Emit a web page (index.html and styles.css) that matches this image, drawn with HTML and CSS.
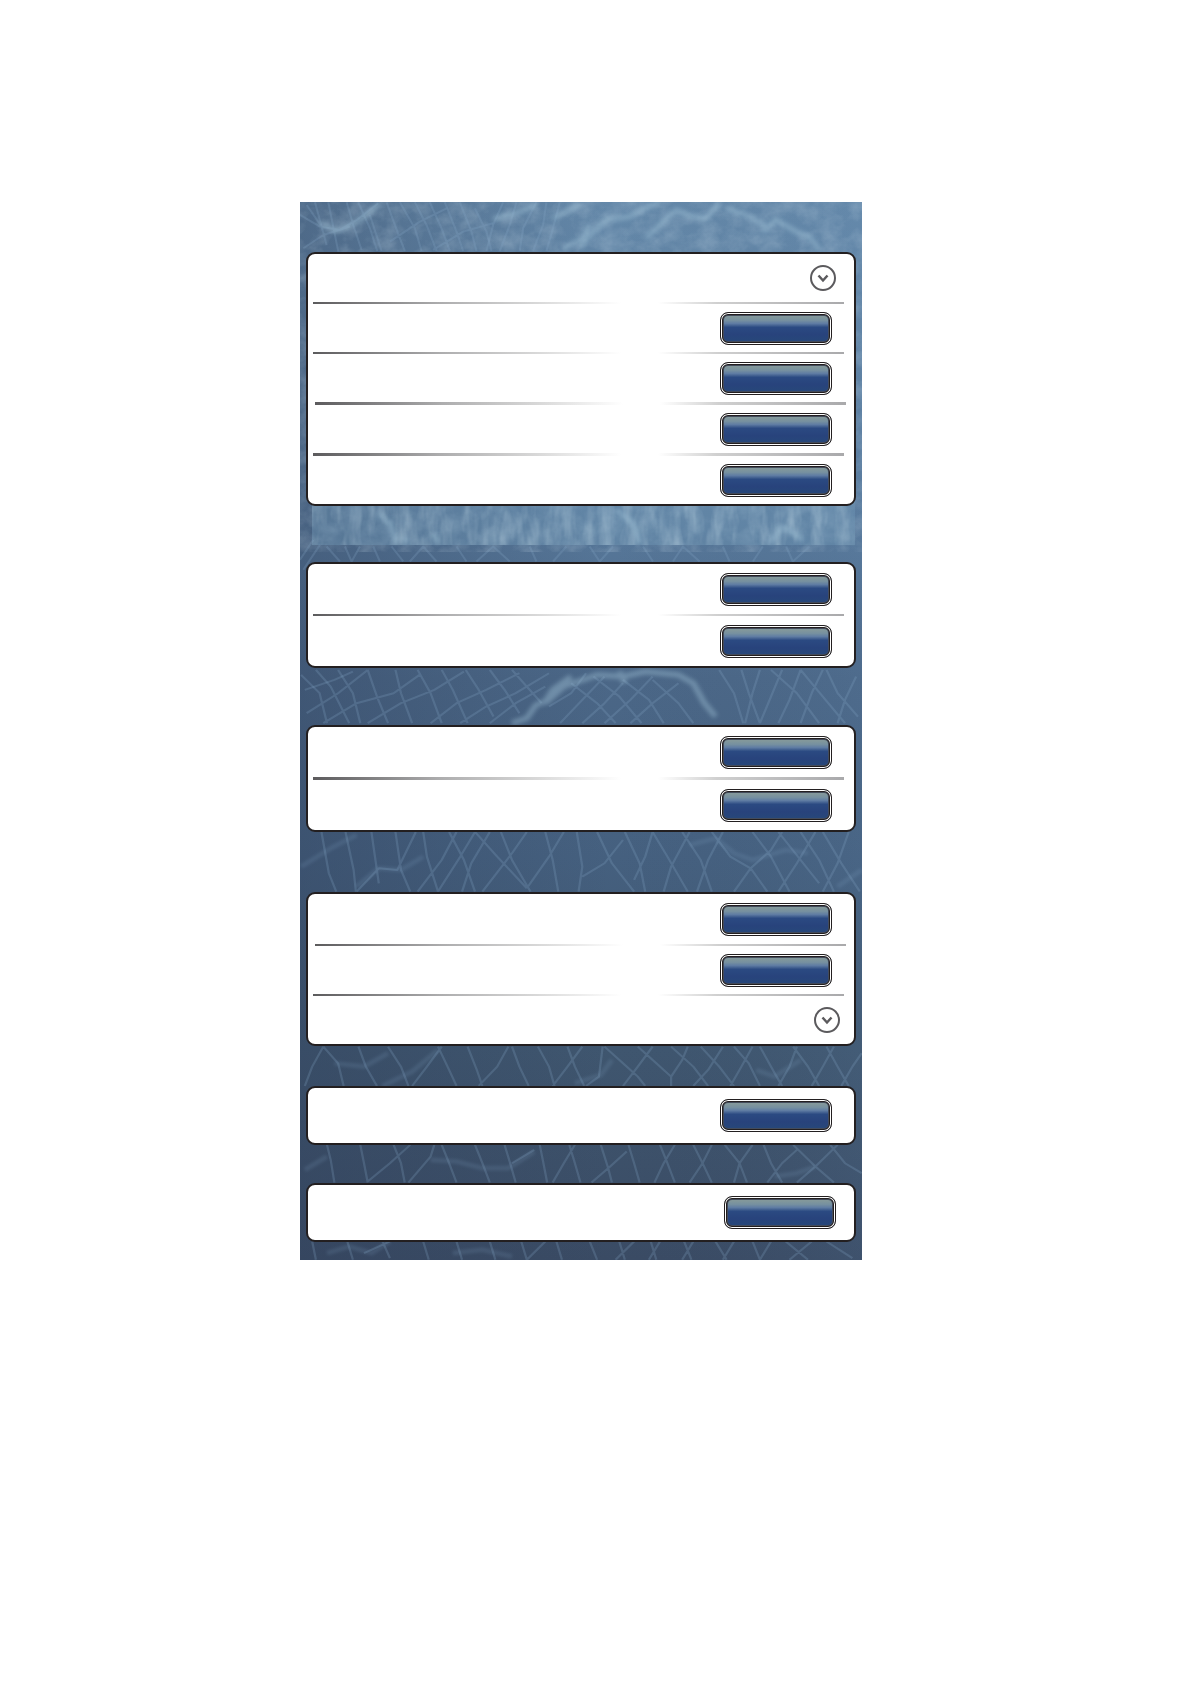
FILE: index.html
```html
<!DOCTYPE html>
<html lang="en">

<head>
    <meta charset="UTF-8">
    <meta name="viewport" content="width=device-width, initial-scale=1.0">
    <title>Settings</title>
    <link rel="stylesheet" href="styles.css">
</head>

<body>
    <main class="panel">
        <!-- water surface behind the cards -->
        <svg class="water" viewBox="300 202 562 1058" preserveAspectRatio="none" aria-hidden="true">
            <defs>
                <linearGradient id="depth" x1="0" y1="0" x2="0" y2="1">
                    <stop offset="0" stop-color="#6488a9" />
                    <stop offset="0.3" stop-color="#58799b" />
                    <stop offset="0.45" stop-color="#4b6787" />
                    <stop offset="0.62" stop-color="#45607f" />
                    <stop offset="0.8" stop-color="#3f566f" />
                    <stop offset="1" stop-color="#3a4b64" />
                </linearGradient>
                <linearGradient id="shade" x1="0" y1="0" x2="1" y2="0">
                    <stop offset="0" stop-color="#2f3f5a" stop-opacity="0.4" />
                    <stop offset="0.55" stop-color="#2f3f5a" stop-opacity="0" />
                    <stop offset="1" stop-color="#6a93bd" stop-opacity="0.1" />
                </linearGradient>
                <filter id="ripple" x="0" y="0" width="1" height="1">
                    <feTurbulence type="fractalNoise" baseFrequency="0.05 0.06" numOctaves="4" seed="4" />
                    <feColorMatrix values="0 0 0 0 0.58  0 0 0 0 0.71  0 0 0 0 0.81  1.4 0 0 0 -0.5" />
                </filter>
                <filter id="streaks" x="0" y="0" width="1" height="1">
                    <feTurbulence type="fractalNoise" baseFrequency="0.08 0.025" numOctaves="3" seed="9" />
                    <feColorMatrix values="0 0 0 0 0.55  0 0 0 0 0.7  0 0 0 0 0.79  1.8 0 0 0 -0.7" />
                </filter>
            </defs>

            <rect x="300" y="202" width="562" height="1058" fill="url(#depth)" />
            <rect x="300" y="202" width="562" height="1058" fill="url(#shade)" />
            <rect x="300" y="202" width="562" height="350" filter="url(#ripple)" opacity="0.35" />

            <!-- top band -->
            <g class="net" transform="translate(290 195) scale(0.333)">
                <path d="M30 60L90 95L150 105L200 75L265 25M50 30L95 95M75 22L110 150M115 22L145 170M170 22L190 90L215 165M205 22L240 100L262 168M240 60L275 168M290 22L330 130L345 168M330 22L375 100L395 168M375 22L410 90L440 168M420 22L455 100L480 168M465 22L500 110L520 168M510 22L545 110L560 168M555 40L590 110L605 168M40 160L100 120L180 95M300 140L390 80L470 40M430 165L520 110L610 85" />
                <path d="M640 22L610 90L590 168M680 22L660 90L630 168M740 22L700 100L690 168M770 22L760 90L730 168M810 22L790 100L770 168" />
                <path class="glint" d="M90 85L140 108L190 88L230 60L270 24M610 72L690 52L740 28M790 70L830 50L870 30M820 160L880 130L900 90" />
                <path class="glint" d="M870 160L900 120L950 75L1020 65L1070 38L1110 22M1070 130L1110 90L1160 45L1200 62L1250 70L1290 24M1420 110L1460 75L1520 110L1560 125L1590 165M1310 40L1370 60L1440 100" />
            </g>

            <!-- lighter strip under the first card -->
            <g>
                <rect x="312" y="500" width="543" height="45" fill="#7098b6" opacity="0.4" />
                <rect x="312" y="500" width="543" height="45" filter="url(#streaks)" opacity="0.45" />
            </g>
            <g class="net" transform="translate(290 380) scale(0.333)">
                <path d="M30 540L70 480M40 570L90 495M110 500L150 545M165 500L185 545L210 500M250 500L270 545M305 500L340 545M360 545L400 500L440 545M500 500L530 545M560 545L610 500L660 545M720 500L740 545M790 545L830 500M900 500L930 545L970 500M1060 500L1090 545M1150 545L1180 500L1230 545M1300 500L1320 545M1390 545L1420 500M1490 500L1510 545L1560 500" />
                <path class="glint" d="M265 400L300 430L320 490M345 470L350 490M430 460L445 490M980 390L1030 430L1050 490M1440 490L1480 440L1540 480" />
            </g>

            <!-- between cards 2 and 3 -->
            <g class="net" transform="translate(290 560) scale(0.37 0.333)">
                <path d="M30 345L80 400L100 490M45 460L130 400L210 330M70 330L110 380L160 490M130 330L170 400L190 490M210 330L235 410L265 490M285 330L300 400L330 490M345 330L380 400L410 490M410 330L440 390L480 490M475 330L510 390L550 470M540 330L580 390L620 460M600 330L640 380L680 430M90 490L180 430L280 400L350 345M210 490L300 430L390 390L470 335M380 490L450 430L530 390L620 340M460 490L530 440L610 400L700 340M540 490L610 430L690 380" />
                <path d="M40 390L120 360L170 335M700 440L760 400L800 340M730 490L790 420L850 350M790 490L850 430L900 370M850 490L920 420L980 350M920 490L980 430L1050 370M760 370L830 430L880 490M820 350L890 410L950 490M900 360L970 420L1010 490M980 360L1050 430L1090 490M1160 330L1200 400L1225 490M1220 330L1240 400L1270 490M1270 330L1250 400L1230 490M1330 330L1300 410L1270 490M1380 330L1350 420L1320 490M1440 330L1410 400L1380 490M1300 330L1370 400L1430 490M1380 330L1440 410L1500 490M1450 330L1480 400L1535 470M1530 350L1500 420L1480 490" />
                <path class="glint" d="M600 490L640 475L665 435L690 425L710 390L760 350M690 430L740 380L830 345L900 350L960 335L1050 345L1090 370L1120 430L1150 470M890 335L905 370" />
            </g>

            <!-- between cards 3 and 4 -->
            <g class="net" transform="translate(290 820) scale(0.37 0.333)">
                <path d="M85 36L105 160L125 215M150 36L172 150L178 215M220 36L240 190M285 36L300 150L325 215M180 215L240 145L290 150L340 36M345 215L410 120L450 36M360 36L370 110L400 215M400 215L460 110L500 36M430 36L470 120L500 215M465 215L490 130L540 36M500 36L560 110L640 205M520 215L600 100L640 36M570 36L600 120L650 215M640 205L700 110L740 36M690 36L710 120L725 215M775 36L790 140L780 215M790 170L850 130L900 60M830 36L870 130L930 215M930 180L960 110L980 36M905 36L945 130L960 215M1010 215L1030 140L1080 36M980 36L1020 110L1075 215M1060 36L1110 120L1140 215M1100 215L1130 120L1170 36M1140 36L1190 110L1245 145L1290 215M1200 215L1245 145L1300 90L1330 36M1250 36L1300 110L1350 215M1320 215L1370 130L1420 36M1320 36L1380 120L1430 190M1380 36L1430 120L1470 215M1440 215L1480 130L1510 36M1440 36L1490 130L1540 215" />
                <path class="wide" d="M30 140L110 85L180 45M180 200L240 145L300 150L360 110M1080 75L1150 55L1200 100L1250 120L1340 90L1400 100M1480 200L1545 150" />
            </g>

            <!-- between cards 4 and 5 -->
            <g class="net" transform="translate(290 1040) scale(0.37 0.333)">
                <path d="M90 20L60 80L40 138M90 20L130 70L145 138M185 20L205 80L235 138M265 20L300 80L320 138M330 138L370 80L410 20M400 20L430 90L450 138M480 20L505 90L520 138M590 20L560 80L510 138M600 20L620 80L645 138M670 20L700 80L715 138M710 138L750 80L790 20M750 20L770 80L795 138M845 20L835 110L800 138M850 20L900 70L940 110L960 138M900 138L940 80L980 20M940 20L990 70L1030 110M1030 138L1030 110L1060 60L1075 20M1030 20L1090 80L1130 138M1090 138L1130 90L1170 20M1110 20L1160 80L1200 138M1190 138L1220 80L1250 20M1200 20L1240 70L1270 138M1320 138L1350 80L1370 20M1270 20L1310 100L1330 138M1410 138L1440 80L1470 20M1360 20L1400 80L1430 138M1450 20L1480 80L1510 138M1490 138L1520 80L1545 40" />
                <path class="wide" d="M120 70L200 80L265 40M250 138L330 95L400 30M770 130L840 105L870 60M1260 90L1310 110L1380 60" />
            </g>

            <!-- between cards 5 and 6 -->
            <g class="net" transform="translate(290 1040) scale(0.37 0.333)">
                <path d="M100 315L110 360L120 428M190 315L200 370L210 428M280 315L300 370L310 428M210 425L270 370L325 315M320 428L380 350L390 315M410 315L430 370L450 428M500 315L520 370L540 428M580 315L595 370L610 428M600 370L660 330M675 315L685 370L695 428M710 428L740 370L770 315M755 315L770 370L785 428M840 315L860 385L870 428M815 428L860 385L910 335M915 315L930 370L945 428M1000 315L1020 370L1040 428M985 428L1010 370L1040 315M1090 315L1115 370L1140 428M1080 428L1115 370L1140 315M1175 315L1215 370L1235 428M1200 428L1215 370L1250 315M1280 315L1300 370L1330 428M1290 428L1330 370L1370 330M1360 315L1420 380L1470 428M1370 428L1420 380L1480 315M1460 315L1500 370L1545 400" />
                <path class="wide" d="M40 390L100 350M380 360L450 365L520 385L590 385L660 335M1310 410L1370 400L1420 380" />
            </g>

            <!-- bottom edge -->
            <g class="net" transform="translate(290 1040) scale(0.37 0.333)">
                <path d="M60 605L70 660M155 605L170 660M250 605L270 655M200 640L270 605M360 605L375 660M450 605L465 660M540 605L555 660M625 605L640 660M640 660L690 605M720 605L735 660M810 605L830 660M890 605L905 660M880 660L930 605M975 605L990 660M970 660L1000 605M1065 605L1085 660M1060 660L1090 605M1150 605L1180 660M1170 660L1200 605M1250 605L1270 660L1300 605M1340 605L1400 660M1350 660L1410 605M1450 605L1520 655" />
                <path class="wide" d="M100 640L160 620L220 640L270 605M440 640L520 630L600 650" />
            </g>
        </svg>

        <section class="card gap-56">
            <div class="row">
                <button type="button" class="expand" aria-label="Expand">
                    <svg viewBox="0 0 26 26"><circle cx="13" cy="13" r="12" /><path d="M8.5 10.5L13 15.5L17.5 10.5" /></svg>
                </button>
            </div>
            <hr class="rule">
            <div class="row"><button type="button" class="btn" aria-label="Option 1"></button></div>
            <hr class="rule">
            <div class="row"><button type="button" class="btn" aria-label="Option 2"></button></div>
            <hr class="rule thick inset">
            <div class="row"><button type="button" class="btn" aria-label="Option 3"></button></div>
            <hr class="rule thick">
            <div class="row"><button type="button" class="btn" aria-label="Option 4"></button></div>
        </section>

        <section class="card gap-57">
            <div class="row mid"><button type="button" class="btn" aria-label="Option 5"></button></div>
            <hr class="rule">
            <div class="row mid"><button type="button" class="btn" aria-label="Option 6"></button></div>
        </section>

        <section class="card gap-60">
            <div class="row mid"><button type="button" class="btn" aria-label="Option 7"></button></div>
            <hr class="rule thick">
            <div class="row mid"><button type="button" class="btn" aria-label="Option 8"></button></div>
        </section>

        <section class="card gap-40">
            <div class="row mid"><button type="button" class="btn" aria-label="Option 9"></button></div>
            <hr class="rule inset">
            <div class="row"><button type="button" class="btn" aria-label="Option 10"></button></div>
            <hr class="rule">
            <div class="row far">
                <button type="button" class="expand" aria-label="Expand">
                    <svg viewBox="0 0 26 26"><circle cx="13" cy="13" r="12" /><path d="M8.5 10.5L13 15.5L17.5 10.5" /></svg>
                </button>
            </div>
        </section>

        <section class="card gap-38">
            <div class="row tall"><button type="button" class="btn" aria-label="Option 11"></button></div>
        </section>

        <section class="card">
            <div class="row tall far"><button type="button" class="btn" aria-label="Option 12"></button></div>
        </section>
    </main>
</body>

</html>
```

FILE: styles.css
```css
* {
    box-sizing: border-box;
}

body {
    margin: 0;
    padding: 202px 0;
    background: #fff;
    font-family: "Liberation Sans", Arial, sans-serif;
    display: grid;
    grid-template-columns: 300fr 562fr 328fr;
}

.panel {
    grid-column: 2;
    position: relative;
    padding: 50px 6px 18px;
    background: #4b6787;
}

/* backdrop */
.water {
    position: absolute;
    inset: 0;
    width: 100%;
    height: 100%;
}

.net path {
    fill: none;
    stroke: #86a8c8;
    stroke-width: 6;
    stroke-linejoin: round;
    opacity: 0.24;
    filter: blur(1px);
}

.net .wide {
    stroke-width: 14;
    opacity: 0.16;
    filter: blur(5px);
}

.net .glint {
    stroke: #a4c6da;
    stroke-width: 16;
    opacity: 0.42;
    filter: blur(6px);
}

/* cards */
.card {
    position: relative;
    border: 2px solid #231f20;
    border-radius: 9px;
    background: #fff;
}

.gap-38 {
    margin-bottom: 38px;
}

.gap-40 {
    margin-bottom: 40px;
}

.gap-56 {
    margin-bottom: 56px;
}

.gap-57 {
    margin-bottom: 57px;
}

.gap-60 {
    margin-bottom: 60px;
}

.row {
    display: flex;
    align-items: center;
    justify-content: flex-end;
    min-height: 48px;
    padding: 0 22px 0 5px;
}

.row.mid {
    min-height: 50px;
}

.row.tall {
    min-height: 55px;
}

.row:has(.expand) {
    padding-right: 18px;
}

.row.far {
    padding-right: 18px;
}

.row.far:has(.expand) {
    padding-right: 14px;
}

.rule {
    height: 2px;
    margin: 0 10px 0 5px;
    border: 0;
    background: linear-gradient(to right, #5c5b5d 0%, #adadae 24%, #d8d8d8 42%, #fff 58%, #fff 65%, #d0d0d0 76%, #a9a9ab 100%);
}

.rule.thick {
    height: 3px;
}

.rule.inset {
    margin: 0 8px 0 7px;
}

.btn {
    width: 112px;
    height: 33px;
    padding: 0;
    border: 1px solid #231f20;
    border-radius: 8px;
    background: linear-gradient(#83989b 12%, #7690a0 24%, #5f7ca3 34%, #2b4a82 46%, #28437c 70%, #27477a 90%);
    box-shadow: inset 0 0 0 1px #fff, inset 0 0 0 2px #231f20, inset 0 0 0 3px #434b5b;
    cursor: pointer;
}

.expand {
    width: 26px;
    height: 26px;
    padding: 0;
    border: 0;
    background: none;
    cursor: pointer;
}

.expand svg {
    display: block;
    fill: none;
    stroke: #5b5a5d;
    stroke-width: 2;
}

.expand path {
    stroke-width: 2.5;
}
```
